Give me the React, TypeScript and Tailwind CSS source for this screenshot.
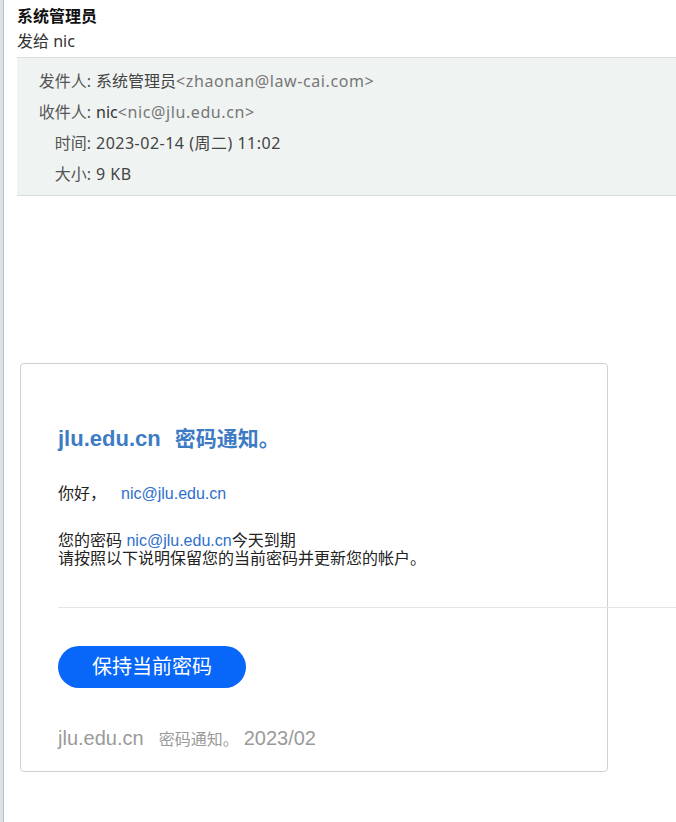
import React from "react";

const sans = { fontFamily: '"Noto Sans", "Liberation Sans", "Noto Sans CJK SC", sans-serif' };
const body = { fontFamily: '"Liberation Sans", Arial, "Noto Sans CJK SC", sans-serif' };

function Row({ label, children }: { label: string; children: React.ReactNode }) {
  return (
    <div className="flex h-[31px] items-center text-[16px]">
      <div className="w-[74px] shrink-0 text-right text-[#555]">{label}</div>
      <div className="ml-[5px] flex items-center whitespace-nowrap">{children}</div>
    </div>
  );
}

export default function App() {
  return (
    <div className="flex min-h-[822px] w-[676px] overflow-hidden bg-white" style={sans}>
      <div className="w-[4px] shrink-0 border-r border-[#b9c0c8] bg-[#dde2e7]" />
      <div className="flex-1 pl-[13px]">
        <div className="pt-[5px]">
          <div className="h-[22px] text-[16px] font-bold leading-[22px] text-[#111]">系统管理员</div>
          <div className="mt-[3px] h-[22px] text-[16px] leading-[22px] text-[#333]">发给 nic</div>
        </div>
        <div className="mt-[5px] border-y border-[#d9dcdc] bg-[#eff3f2] pt-[7px] pb-[6px]">
          <Row label="发件人:">
            <span className="text-[#444]">系统管理员</span>
            <span className="tracking-[0.6px] text-[#777]">&lt;zhaonan@law-cai.com&gt;</span>
          </Row>
          <Row label="收件人:">
            <span className="text-[#333]">nic</span>
            <span className="tracking-[0.6px] text-[#777]">&lt;nic@jlu.edu.cn&gt;</span>
          </Row>
          <Row label="时间:">
            <span className="tracking-[0.5px] text-[#444]">2023-02-14 (周二) 11:02</span>
          </Row>
          <Row label="大小:">
            <span className="tracking-[0.5px] text-[#444]">9 KB</span>
          </Row>
        </div>

        <div
          className="mt-[167px] ml-[3px] w-[588px] rounded-[4px] border border-[#cfd2d4] pl-[37px] pt-[62px] pb-[21px]"
          style={body}
        >
          <div className="h-[26px] whitespace-nowrap leading-[26px] text-[#3d7cc4]">
            <span className="text-[22px] font-bold">jlu.edu.cn</span>
            <span className="ml-[14px] text-[21px] font-semibold">密码通知。</span>
          </div>

          <div className="mt-[33px] flex h-[18px] items-center whitespace-nowrap text-[16px] leading-[18px] text-[#222]">
            <span>你好，</span>
            <span className="ml-[15px] text-[#2e6fce]">nic@jlu.edu.cn</span>
          </div>

          <div className="mt-[29px] whitespace-nowrap text-[16px] leading-[18px] text-[#222]">
            <div>
              您的密码 <span className="text-[#2e6fce]">nic@jlu.edu.cn</span>今天到期
            </div>
            <div>请按照以下说明保留您的当前密码并更新您的帐户。</div>
          </div>

          <div className="mt-[39px] h-px w-[618px] bg-[#e2e4e6]" />

          <div className="mt-[38px] flex h-[42px] w-[188px] items-center justify-center rounded-full bg-[#0866f8] text-[20px] text-white">
            保持当前密码
          </div>

          <div className="mt-[38px] flex h-[24px] items-baseline whitespace-nowrap leading-[24px] text-[#9a9a9a]">
            <span className="text-[20px]">jlu.edu.cn</span>
            <span className="ml-[15px] text-[16px]">密码通知。</span>
            <span className="ml-[5px] text-[20px]">2023/02</span>
          </div>
        </div>
      </div>
    </div>
  );
}
